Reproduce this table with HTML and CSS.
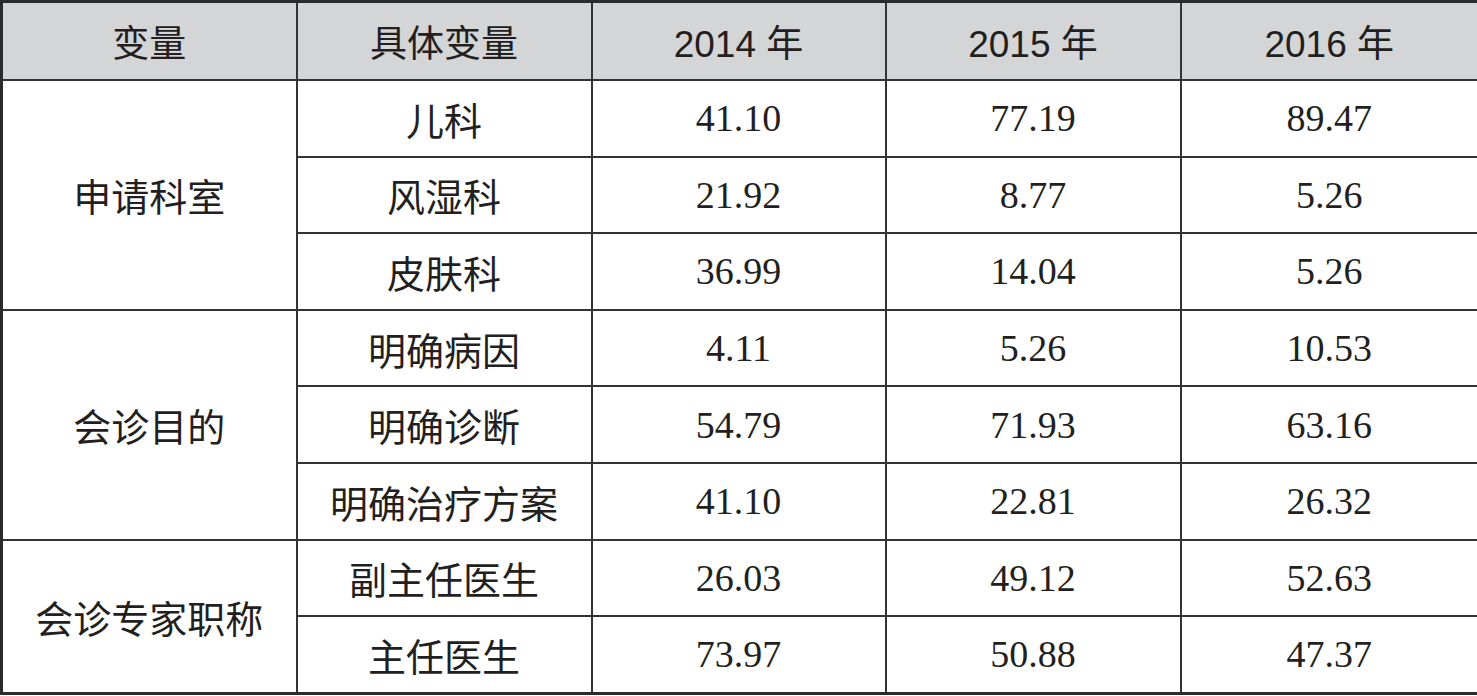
FILE: index.html
```html
<!DOCTYPE html>
<html>
<head>
  <meta charset="utf-8">
  <title>会诊数据</title>
  <link rel="stylesheet" href="styles.css">
</head>
<body>

  <table class="stats">
    <colgroup>
      <col class="c1"><col class="c2"><col class="c3"><col class="c4"><col class="c5">
    </colgroup>
    <thead>
      <tr>
        <th>变量</th>
        <th>具体变量</th>
        <th>2014 年</th>
        <th>2015 年</th>
        <th>2016 年</th>
      </tr>
    </thead>
    <tbody>
      <tr>
        <td class="group" rowspan="3">申请科室</td>
        <td>儿科</td><td>41.10</td><td>77.19</td><td>89.47</td>
      </tr>
      <tr><td>风湿科</td><td>21.92</td><td>8.77</td><td>5.26</td></tr>
      <tr><td>皮肤科</td><td>36.99</td><td>14.04</td><td>5.26</td></tr>

      <tr>
        <td class="group" rowspan="3">会诊目的</td>
        <td>明确病因</td><td>4.11</td><td>5.26</td><td>10.53</td>
      </tr>
      <tr><td>明确诊断</td><td>54.79</td><td>71.93</td><td>63.16</td></tr>
      <tr><td>明确治疗方案</td><td>41.10</td><td>22.81</td><td>26.32</td></tr>

      <tr>
        <td class="group" rowspan="2">会诊专家职称</td>
        <td>副主任医生</td><td>26.03</td><td>49.12</td><td>52.63</td>
      </tr>
      <tr><td>主任医生</td><td>73.97</td><td>50.88</td><td>47.37</td></tr>
    </tbody>
  </table>

</body>
</html>
```

FILE: styles.css
```css
body {
  margin: 0;
  background: #fff;
  color: #231f20;
}

.stats {
  width: 1477px;
  border-collapse: collapse;
  table-layout: fixed;
  border: 3px solid #2b2b2b;
}

.c1 { width: 295px; }
.c2 { width: 295px; }
.c3 { width: 294px; }
.c4 { width: 295px; }
.c5 { width: 298px; }

.stats th,
.stats td {
  border: 2px solid #333;
  text-align: center;
  vertical-align: middle;
  padding: 0;
}

.stats th {
  height: 76px;
  background: #d4d5d7;
  font-family: "Liberation Sans", "Noto Sans CJK SC", sans-serif;
  font-size: 37px;
  font-weight: normal;
}

.stats td {
  height: 74.6px;
  font-family: "Liberation Serif", "Noto Sans CJK SC", serif;
  font-size: 38px;
}
```
